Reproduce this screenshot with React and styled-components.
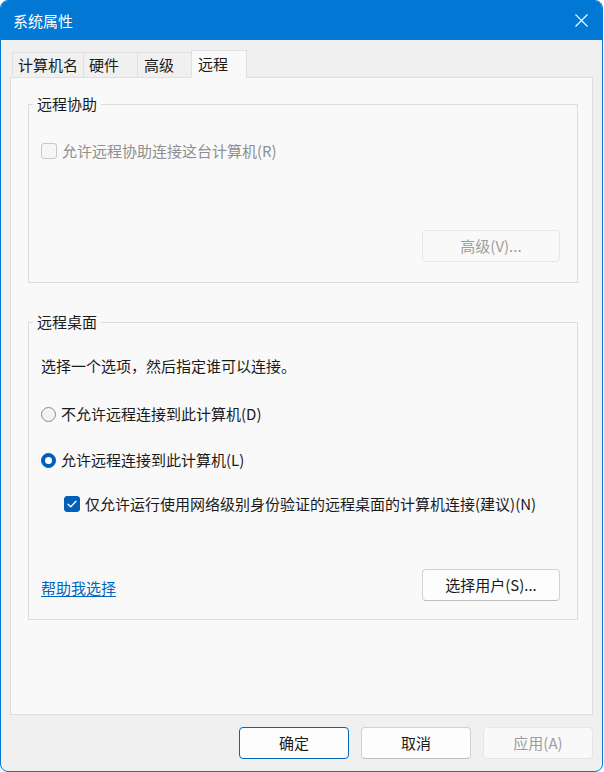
import React from 'react';
import styled, { createGlobalStyle } from 'styled-components';

const GlobalStyle = createGlobalStyle`
  html, body {
    margin: 0;
    padding: 0;
    background: #ffffff;
  }
  body {
    font-family: "Noto Sans CJK SC", "Noto Sans", sans-serif;
    font-size: 15px;
    line-height: 20px;
    color: #1a1a1a;
  }
`;

const Window = styled.div`
  box-sizing: border-box;
  width: 603px;
  height: 772px;
  border: 1px solid #0078d4;
  border-radius: 8px;
  overflow: hidden;
  background: #f0f0f0;
  display: flex;
  flex-direction: column;
`;

const TitleBar = styled.div`
  height: 39px;
  flex: none;
  background: #0078d4;
  color: #ffffff;
  display: flex;
  align-items: center;
  justify-content: space-between;
  padding: 0 14px 0 12px;
`;

const Body = styled.div`
  flex: 1;
  display: flex;
  flex-direction: column;
  padding: 10px 9px 11px 9px;
`;

const TabStrip = styled.div`
  display: flex;
  align-items: flex-end;
  height: 28px;
  padding-left: 2px;
  margin-bottom: -1px;
  position: relative;
  z-index: 1;
`;

const Tab = styled.div`
  box-sizing: border-box;
  width: ${p => p.$w}px;
  height: ${p => (p.$active ? 28 : 26)}px;
  padding-left: ${p => p.$pad}px;
  display: flex;
  align-items: center;
  background: ${p => (p.$active ? '#f9f9f9' : '#f0f0f0')};
  border: 1px solid #e0e0e0;
  border-bottom: ${p => (p.$active ? '1px solid #f9f9f9' : '1px solid #e0e0e0')};
  margin-left: ${p => (p.$first ? 0 : -1)}px;
  color: #1a1a1a;
`;

const Panel = styled.div`
  box-sizing: border-box;
  height: 638px;
  background: #f9f9f9;
  border: 1px solid #dcdcdc;
  padding: 16px 14px 0 17px;
  display: flex;
  flex-direction: column;
  gap: 29px;
`;

const Group = styled.fieldset`
  margin: 0;
  padding: 0;
  border: 1px solid #dcdcdc;
  min-width: 0;
`;

const Legend = styled.legend`
  margin-left: 4px;
  padding: 0 4px;
  color: #1a1a1a;
`;

const GroupInner = styled.div`
  display: flex;
  flex-direction: column;
  padding: ${p => p.$pad};
`;

const Row = styled.div`
  display: flex;
  align-items: center;
  height: 20px;
  margin-top: ${p => p.$top || 0}px;
  padding-left: ${p => p.$indent || 0}px;
  color: ${p => (p.$disabled ? '#8f8f8f' : '#1a1a1a')};
  white-space: nowrap;
`;

const Box = styled.span`
  box-sizing: border-box;
  width: 16px;
  height: 16px;
  border-radius: 3px;
  margin-right: 5px;
  flex: none;
  display: flex;
  align-items: center;
  justify-content: center;
  background: ${p => (p.$checked ? '#005fb8' : '#f6f6f6')};
  border: 1px solid ${p => (p.$checked ? '#005fb8' : p.$disabled ? '#c8c8c8' : '#8a8a8a')};
`;

const Radio = styled.span`
  box-sizing: border-box;
  width: 15px;
  height: 15px;
  border-radius: 50%;
  margin-right: 5px;
  flex: none;
  display: flex;
  align-items: center;
  justify-content: center;
  background: ${p => (p.$checked ? '#005fb8' : '#f3f3f3')};
  border: 1px solid ${p => (p.$checked ? '#005fb8' : '#8a8a8a')};

  &::after {
    content: '';
    display: ${p => (p.$checked ? 'block' : 'none')};
    width: 7px;
    height: 7px;
    border-radius: 50%;
    background: #ffffff;
  }
`;

const Button = styled.button`
  box-sizing: border-box;
  width: ${p => p.$w || 110}px;
  height: 32px;
  border-radius: 4px;
  font-family: inherit;
  font-size: 15px;
  line-height: 20px;
  padding: 0;
  background: ${p => (p.$disabled ? '#f9f9f9' : '#fdfdfd')};
  color: ${p => (p.$disabled ? '#9d9d9d' : '#1a1a1a')};
  border: 1px solid ${p => (p.$primary ? '#0067c0' : p.$disabled ? '#e6e6e6' : '#d2d2d2')};
  border-bottom-color: ${p => (p.$primary ? '#0067c0' : p.$disabled ? '#e6e6e6' : '#bdbdbd')};
  cursor: default;
`;

const ActionEnd = styled.div`
  display: flex;
  justify-content: flex-end;
  margin-top: ${p => p.$top || 0}px;
`;

const BottomLine = styled.div`
  display: flex;
  justify-content: space-between;
  align-items: center;
  margin-top: 55px;
`;

const Link = styled.a`
  color: #0067c0;
  text-decoration: underline;
  text-underline-offset: 2px;
  margin-top: 6px;
`;

const Footer = styled.div`
  display: flex;
  justify-content: flex-end;
  gap: 12px;
  margin-top: 12px;
`;

const Close = () => (
  <svg width="13" height="13" viewBox="0 0 13 13">
    <path d="M0.5 0.5 L12.5 12.5 M12.5 0.5 L0.5 12.5" stroke="#ffffff" strokeWidth="1.1" fill="none" />
  </svg>
);

const Check = () => (
  <svg width="10" height="8" viewBox="0 0 10 8">
    <path d="M1 4.2 L3.7 6.8 L9 1.2" stroke="#ffffff" strokeWidth="1.3" fill="none" strokeLinecap="round" strokeLinejoin="round" />
  </svg>
);

const tabs = [
  { label: '计算机名', w: 72, pad: 5 },
  { label: '硬件', w: 55, pad: 5 },
  { label: '高级', w: 55, pad: 6 },
  { label: '远程', w: 56, pad: 6, active: true },
];

export default function App() {
  return (
    <>
      <GlobalStyle />
      <Window>
        <TitleBar>
          <span>系统属性</span>
          <Close />
        </TitleBar>
        <Body>
          <TabStrip>
            {tabs.map((t, i) => (
              <Tab key={t.label} $w={t.w} $pad={t.pad} $active={t.active} $first={i === 0}>
                {t.label}
              </Tab>
            ))}
          </TabStrip>
          <Panel>
            <Group>
              <Legend>远程协助</Legend>
              <GroupInner $pad="27px 17px 20px 12px">
                <Row $disabled>
                  <Box $disabled />
                  允许远程协助连接这台计算机(R)
                </Row>
                <ActionEnd $top={69}>
                  <Button $w={138} $disabled>高级(V)...</Button>
                </ActionEnd>
              </GroupInner>
            </Group>
            <Group>
              <Legend>远程桌面</Legend>
              <GroupInner $pad="24px 17px 18px 12px">
                <Row>选择一个选项，然后指定谁可以连接。</Row>
                <Row $top={28}>
                  <Radio />
                  不允许远程连接到此计算机(D)
                </Row>
                <Row $top={26}>
                  <Radio $checked />
                  允许远程连接到此计算机(L)
                </Row>
                <Row $top={24} $indent={23}>
                  <Box $checked>
                    <Check />
                  </Box>
                  仅允许运行使用网络级别身份验证的远程桌面的计算机连接(建议)(N)
                </Row>
                <BottomLine>
                  <Link>帮助我选择</Link>
                  <Button $w={138}>选择用户(S)...</Button>
                </BottomLine>
              </GroupInner>
            </Group>
          </Panel>
          <Footer>
            <Button $primary>确定</Button>
            <Button>取消</Button>
            <Button $disabled>应用(A)</Button>
          </Footer>
        </Body>
      </Window>
    </>
  );
}
